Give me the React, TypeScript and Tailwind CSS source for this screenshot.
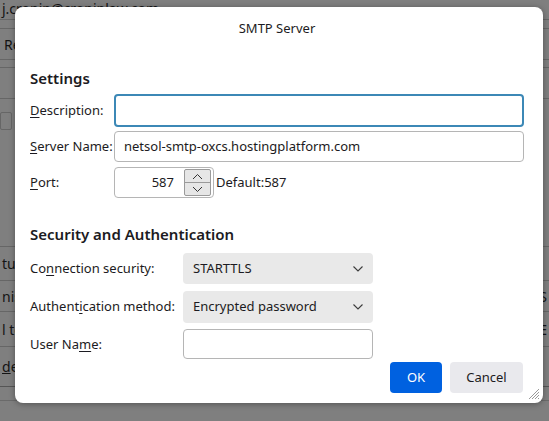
import React from "react";

function Chevron() {
  return (
    <svg width="12" height="8" viewBox="0 0 12 8" className="text-[#3b3b3b]">
      <path d="M1.5 1.5 L6 6 L10.5 1.5" fill="none" stroke="currentColor" strokeWidth="1.1" />
    </svg>
  );
}

function U({ children }: { children: React.ReactNode }) {
  return <span className="underline underline-offset-[2px] decoration-[1px]">{children}</span>;
}

function BgRow({ h, left, right, line = true }: { h: string; left?: string; right?: string; line?: boolean }) {
  return (
    <div className={`${h} flex items-center justify-between px-[2px] ${line ? "border-b border-[#666]" : ""}`}>
      <span>{left}</span>
      <span>{right}</span>
    </div>
  );
}

function Background() {
  return (
    <div className="flex flex-col text-[14px] text-[#141414] font-['Noto_Sans',sans-serif]">
      <div className="h-[20px] border-b border-[#666] flex items-end pl-[2px] leading-[16px] pb-[2px]">j.cronin@croninlaw.com</div>
      <div className="h-[9px] border-b border-[#666]" />
      <div className="h-[31px] border-b border-[#666] flex items-center pl-[4px]">Re</div>
      <div className="h-[8px] border-b border-[#666]" />
      <div className="h-[31px] border-b border-[#666]" />
      <div className="h-[13px]" />
      <div className="h-[18px] w-[12px] border border-[#666] rounded-[2px]" />
      <div className="h-[117px] border-b border-[#666]" />
      <BgRow h="h-[34px]" left="tur" />
      <BgRow h="h-[31px]" left="nis" right="S" />
      <BgRow h="h-[35px]" left="l to" right="E" />
      <div className="h-[38px] flex items-center pl-[2px]"><span><span className="underline">d</span>e</span></div>
      <div className="h-[2px] border-b border-[#555]" />
      <div className="h-[14px] border-b border-[#6a6a6a]" />
    </div>
  );
}

export default function App() {
  return (
    <div className="relative w-[549px] h-[421px] overflow-hidden bg-[#7f7f7f] font-['Noto_Sans',sans-serif] text-[13px] text-[#1c1b22]">
      <Background />
      <div className="absolute left-[15px] top-[7px] w-[528px] h-[396px] rounded-[8px] bg-white shadow-[0_1px_6px_rgba(0,0,0,0.35)] flex flex-col pl-[15px] pr-[19px]">
        <div className="pt-[12px] h-[30px] leading-[18px] text-center">SMTP Server</div>

        <div className="mt-[31px] h-[20px] leading-[20px] text-[15px] font-semibold">Settings</div>

        <div className="mt-[6px] grid grid-cols-[84px_1fr] items-center gap-y-[4px]">
          <label><U>D</U>escription:</label>
          <div className="h-[33px] rounded-[4px] border-2 border-[#3c88b6] bg-white" />
          <label><U>S</U>erver Name:</label>
          <div className="h-[31px] rounded-[4px] border border-[#b5b5b5] flex items-center px-[9px]">netsol-smtp-oxcs.hostingplatform.com</div>
          <label className="mt-[1px]"><U>P</U>ort:</label>
          <div className="mt-[1px] flex items-center">
            <div className="w-[100px] h-[31px] rounded-[4px] border border-[#b5b5b5] flex items-center justify-end pr-[2px]">
              <span className="mr-[10px]">587</span>
              <div className="w-[27px] h-[27px] flex flex-col border border-[#9a9a9a] rounded-[2px] bg-[#e6e6e6]">
                <div className="flex-1 flex items-center justify-center border-b border-[#9a9a9a]">
                  <svg width="11" height="7" viewBox="0 0 11 7"><path d="M1 6 L5.5 1.5 L10 6" fill="none" stroke="#333" strokeWidth="1" /></svg>
                </div>
                <div className="flex-1 flex items-center justify-center">
                  <svg width="11" height="7" viewBox="0 0 11 7"><path d="M1 1 L5.5 5.5 L10 1" fill="none" stroke="#333" strokeWidth="1" /></svg>
                </div>
              </div>
            </div>
            <span className="ml-[2px]">Default:587</span>
          </div>
        </div>

        <div className="mt-[26px] h-[20px] leading-[20px] text-[15px] font-semibold">Security and Authentication</div>

        <div className="mt-[9px] grid grid-cols-[153px_190px] items-center gap-y-[7px]">
          <label>Co<U>n</U>nection security:</label>
          <div className="h-[31px] rounded-[4px] bg-[#e9e9e9] flex items-center justify-between pl-[10px] pr-[9px]">
            <span>STARTTLS</span>
            <Chevron />
          </div>
          <label>Authent<U>i</U>cation method:</label>
          <div className="h-[32px] rounded-[4px] bg-[#e9e9e9] flex items-center justify-between pl-[10px] pr-[9px]">
            <span>Encrypted password</span>
            <Chevron />
          </div>
          <label>User Na<U>m</U>e:</label>
          <div className="h-[30px] rounded-[4px] border border-[#b5b5b5] bg-white -mt-[1px]" />
        </div>

        <div className="mt-[3px] flex justify-end gap-[8px] mr-[1px]">
          <button className="w-[52px] h-[31px] rounded-[4px] bg-[#0061e0] text-white text-[13px]">OK</button>
          <button className="w-[73px] h-[31px] rounded-[4px] bg-[#e9e9ed] text-[13px]">Cancel</button>
        </div>

        <svg className="absolute right-[3px] bottom-[3px]" width="13" height="13" viewBox="0 0 13 13">
          <path d="M12 2 L2 12 M12 5 L5 12 M12 8 L8 12 M12 11 L11 12" stroke="#9a9a9a" strokeWidth="1" />
        </svg>
      </div>
    </div>
  );
}
